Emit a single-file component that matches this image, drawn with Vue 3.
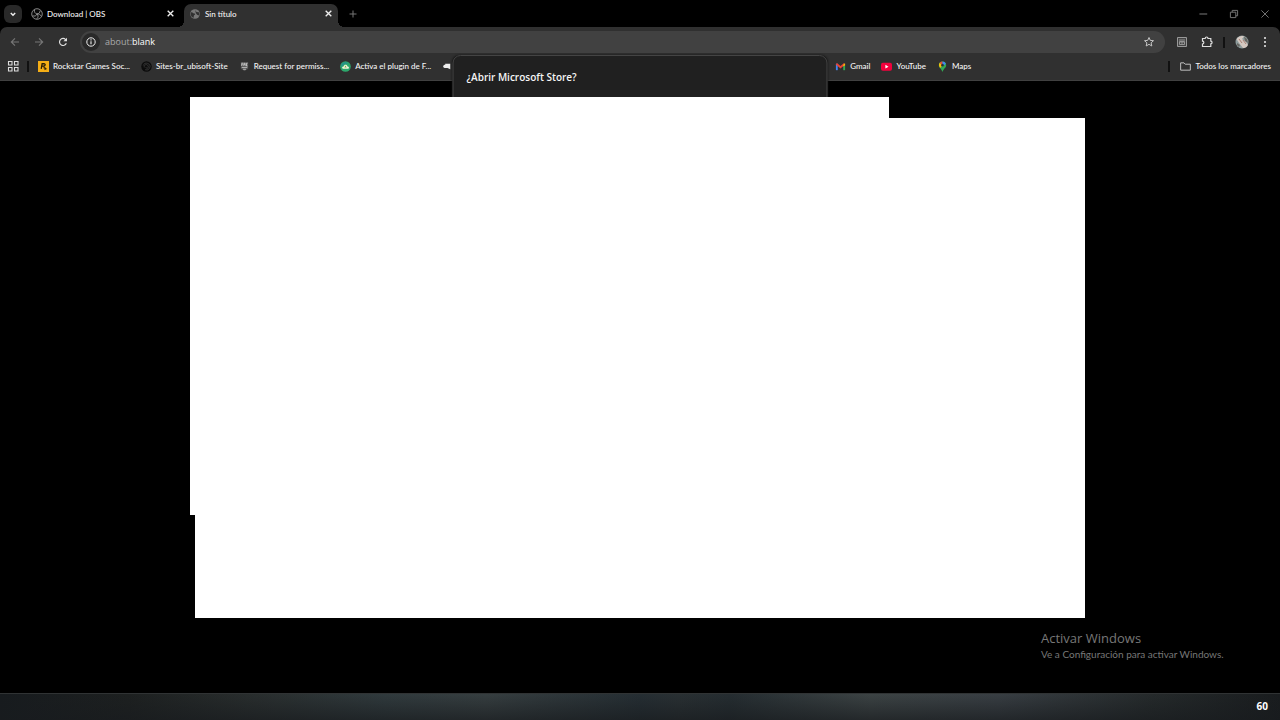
<script setup>
const bookmarks = [
  { label: 'Rockstar Games Soc...', icon: 'rockstar' },
  { label: 'Sites-br_ubisoft-Site', icon: 'ubisoft' },
  { label: 'Request for permiss...', icon: 'epic' },
  { label: 'Activa el plugin de F...', icon: 'plugin' },
]
const googleLinks = [
  { label: 'Gmail', icon: 'gmail' },
  { label: 'YouTube', icon: 'youtube' },
  { label: 'Maps', icon: 'maps' },
]
</script>

<template>
  <div class="desktop">
    <header class="browser">
      <div class="titlebar">
        <button class="tab-search" aria-label="Buscar pestañas">
          <svg viewBox="0 0 18 18"><path d="M6.8 8 9 10.2 11.2 8" fill="none" stroke="#eee" stroke-width="1.5" /></svg>
        </button>
        <div class="tab">
          <svg class="favicon" viewBox="0 0 12 12">
            <circle cx="6" cy="6" r="5.3" fill="#090909" stroke="#a5a5a5" stroke-width=".8" />
            <path d="M3.5 1.8C3 4 4.1 5.5 6 6c2-.2 3.2-1.6 3-3.3M6 6c-.8 1.9-2.4 2.6-4.4 1.8M6 6c1.5 1.4 1.4 3.3-.2 4.8M6 6c1.8-.3 3.5.6 4.3 2.2" fill="none" stroke="#999" stroke-width=".9" />
          </svg>
          <span class="tab-title">Download | OBS</span>
          <button class="close" aria-label="Cerrar Download"><svg viewBox="0 0 8 8"><path d="m1.5 1.5 5 5m0-5-5 5" stroke="#eee" stroke-width="1.2" /></svg></button>
        </div>
        <div class="tab active">
          <svg class="favicon globe" viewBox="0 0 12 12">
            <circle cx="6" cy="6" r="4.8" fill="#777" />
            <path d="M2 4.2c1.8-.3 2.2 1.3 3.8 1.4.8.5.1 1.4-.8 1.7-.2 1-.3 1.8-.6 2.6C2.5 9 1.7 7.5 1.7 6zM6.3 2l1.2 1.9 2.3.3c.6 1.2.7 2.2.3 3.2L8 6.8 6.8 5z" fill="#303030" />
          </svg>
          <span class="tab-title">Sin título</span>
          <button class="close" aria-label="Cerrar Sin título"><svg viewBox="0 0 8 8"><path d="m1.5 1.5 5 5m0-5-5 5" stroke="#eee" stroke-width="1.2" /></svg></button>
        </div>
        <button class="new-tab" aria-label="Nueva pestaña"><svg viewBox="0 0 10 10"><path d="M5 1.5v7M1.5 5h7" stroke="#777" /></svg></button>
        <div class="window-controls">
          <button aria-label="Minimizar"><svg viewBox="0 0 10 10"><path d="M2 5h6.500" stroke="#666" /></svg></button>
          <button aria-label="Restaurar"><svg viewBox="0 0 10 10"><path d="M2 3.500h4.500V8H2zM3.500 3.500V2H8v4.500H6.500" fill="none" stroke="#777" stroke-width=".8" /></svg></button>
          <button aria-label="Cerrar"><svg viewBox="0 0 10 10"><path d="m2 2 6 6m0-6L2 8" stroke="#777" stroke-width=".8" /></svg></button>
        </div>
      </div>

      <div class="chrome">
        <div class="toolbar">
          <div class="navigation">
            <button class="nav" aria-label="Atrás"><svg viewBox="0 0 12 12"><path d="M10 6H2.500M6 2.300 2.300 6 6 9.700" fill="none" stroke="#777" stroke-width="1.100" /></svg></button>
            <button class="nav" aria-label="Adelante"><svg viewBox="0 0 12 12"><path d="M2 6h7.500M6 2.300 9.700 6 6 9.700" fill="none" stroke="#777" stroke-width="1.100" /></svg></button>
            <button class="nav" aria-label="Recargar"><svg viewBox="0 0 12 12"><path d="M9.300 7.200A3.500 3.500 0 1 1 8.600 3.600L9.500 4.600" fill="none" stroke="#ddd" stroke-width="1.200" /><path d="M10 1.700v3.600H6.400z" fill="#ddd" /></svg></button>
          </div>
          <div class="omnibox">
            <button class="info" aria-label="Información del sitio"><svg viewBox="0 0 12 12"><circle cx="6" cy="6" r="4.200" fill="none" stroke="#eee" /><path d="M6 5.300v3M6 3.300v1.100" stroke="#eee" stroke-width="1.100" /></svg></button>
            <div class="address"><span>about:</span>blank</div>
            <button class="star" aria-label="Añadir a marcadores"><svg viewBox="0 0 12 12"><path d="m6 1.500 1.300 2.900 3.200.3L8.100 6.800l.7 3.200L6 8.300 3.200 10l.7-3.200-2.400-2.100 3.200-.3z" fill="none" stroke="#c4c4c4" stroke-width="1" /></svg></button>
          </div>
          <div class="actions">
            <button class="extension" aria-label="Extensión"><svg viewBox="0 0 12 12"><path d="M1.500 1.500h9v9h-9z" fill="#444" stroke="#999" /><path d="M3 4h6M3.500 5.500h5v3h-5z" fill="none" stroke="#aaa" stroke-width=".8" /><path d="M5 6v1h2V6" fill="none" stroke="#aaa" stroke-width=".7" /></svg></button>
            <button aria-label="Extensiones"><svg viewBox="0 0 12 12"><path d="M1.500 2.500h2.700c0-2 2.800-2 2.800 0h2.800v2.600c1.700.1 1.700 2.700 0 2.800v2.600H1.500V8c1.800-.2 1.800-2.600 0-2.800z" fill="none" stroke="#ddd" stroke-width="1.200" /></svg></button>
            <i class="separator"></i>
            <button class="profile" aria-label="Perfil"><svg viewBox="0 0 14 14"><circle cx="7" cy="7" r="6.500" fill="#8d9b9c" /><path d="M1.500 4C4 1 7 .5 9 1.500L7 4l4 3 2 3c-1 2-3 3.500-5 3L4 8z" fill="#d4c8c1" /><path d="m9 1.500 3 2.500 1 4-3-2zM2 8l3 2-1 2-2-2z" fill="#66645f" /><path d="m4 4 3 4M8 5l3 4" stroke="#a88075" /></svg></button>
            <button aria-label="Menú"><svg viewBox="0 0 12 12"><g fill="#eee"><circle cx="6" cy="2" r="1" /><circle cx="6" cy="6" r="1" /><circle cx="6" cy="10" r="1" /></g></svg></button>
          </div>
        </div>

        <nav class="bookmarks" aria-label="Marcadores">
          <button class="apps" aria-label="Aplicaciones"><svg viewBox="0 0 12 12"><path d="M1.500 1.500H5V5H1.500zM7.500 1.500H11V5H7.500zM1.500 7.500H5V11H1.500zM7.500 7.500H11V11H7.500z" fill="none" stroke="#ddd" stroke-width="1.100" /></svg></button>
          <i class="separator"></i>
          <div class="saved">
            <a v-for="item in bookmarks" :key="item.label" href="#">
              <svg viewBox="0 0 12 12">
                <template v-if="item.icon === 'rockstar'"><path d="M0 0h12v12H0z" fill="#f5ae16" /><path d="M3.500 8.500 4.500 3h2c2 0 1.700 2.500-.5 2.500H4.200M6 5.500c1.200.2.700 1.400.8 2.200" fill="none" stroke="#281b05" stroke-width="1.400" /><path d="m8 6.500.5 1.300H10L8.800 8.700l.4 1.300L8 9.200 6.800 10l.4-1.300L6 7.800h1.500z" fill="#281b05" /></template>
                <template v-else-if="item.icon === 'ubisoft'"><circle cx="6" cy="6" r="5.700" fill="#0c0c0c" /><path d="M2.500 5a3.700 3.700 0 1 1 2 4.500M3.500 7C3 3 8 3 8 6.500 7.500 9 5 8 5.500 6.500" fill="none" stroke="#3c3c3c" stroke-width=".9" /></template>
                <template v-else-if="item.icon === 'epic'"><path d="M2 1h8v7.500L6 11 2 8.500z" fill="#555" /><path d="M3 5.500v-3h1.300M3 4h1M5.300 5.500v-3h1v1.500h-1M7.500 2.500v3M9.300 2.500h-1v3h1M3 7h6M4.500 9h3" fill="none" stroke="#ddd" stroke-width=".8" /></template>
                <template v-else><circle cx="6" cy="6" r="5.800" fill="#2da66b" /><path d="M2 6a4 4 0 0 1 6-3.400" fill="none" stroke="#248d92" stroke-width="1.500" /><path d="M3.400 8.500C1.500 8 2.200 5.800 4 6c.4-2.500 3.700-2.500 4.200 0 2 0 2.200 2.500.4 2.500z" fill="#f4f5dc" /><path d="m6 5 1.300 2H4.700z" fill="#74b344" /></template>
              </svg>
              <span>{{ item.label }}</span>
            </a>
            <a class="cloud" href="#" aria-label="Marcador"><svg viewBox="0 0 12 12"><path d="M3.500 3H9v6L6 7.500H3C.5 7 .8 4 3.500 4z" fill="#eee" /></svg></a>
          </div>
          <div class="google">
            <a v-for="item in googleLinks" :key="item.label" href="#">
              <svg viewBox="0 0 12 12">
                <template v-if="item.icon === 'gmail'"><path d="M2 10V3" stroke="#4285f4" stroke-width="2" /><path d="M10 10V3" stroke="#34a853" stroke-width="2" /><path d="M1.500 3 6 6.800 10.500 3" fill="none" stroke="#ea4335" stroke-width="2" /><path d="M9 4.200 11 2.500v2L9 6z" fill="#fbbc04" /></template>
                <template v-else-if="item.icon === 'youtube'"><rect y="2" width="12" height="8.500" rx="2" fill="#f2003c" /><path d="m4.800 4.200 3.400 2-3.400 2z" fill="#fff" /></template>
                <template v-else><path d="M2 4.500a4 4 0 0 1 8 0C10 7.500 7 8 6 12 5 8 2 7.500 2 4.500" fill="#34a853" /><path d="M2.300 5.500A4 4 0 0 1 3 2l3 2.500-2.500 3z" fill="#fbbc04" /><path d="M3 2a4 4 0 0 1 3-1.500L6 4.500z" fill="#ea4335" /><path d="M6 .500A4 4 0 0 1 9.600 3L6 6z" fill="#4285f4" /><circle cx="6" cy="4.500" r="1.400" fill="#303030" /></template>
              </svg>
              <span>{{ item.label }}</span>
            </a>
          </div>
          <div class="all">
            <i class="separator"></i>
            <a href="#"><svg viewBox="0 0 12 12"><path d="M.7 2h3.600l1.400 1.500h5.600V10H.7z" fill="none" stroke="#ccc" /></svg><span>Todos los marcadores</span></a>
          </div>
        </nav>
      </div>
    </header>

    <main class="page">
      <section class="dialog" role="dialog" aria-labelledby="dialog-title"><h1 id="dialog-title">¿Abrir Microsoft Store?</h1></section>
      <div class="pane back"></div>
      <div class="pane front"></div>
      <aside class="activation"><h2>Activar Windows</h2><p>Ve a Configuración para activar Windows.</p></aside>
    </main>
    <footer class="taskbar"><span>60</span></footer>
  </div>
</template>

<style>
html, body { margin: 0; background: #000; }
</style>

<style scoped>
* { box-sizing: border-box; }
.desktop { min-height: 100vh; display: flex; flex-direction: column; background: #000; color: #f5f5f5; font: 500 8px/12px Lato, "Open Sans", sans-serif; overflow: hidden; }
button { border: 0; padding: 0; background: none; color: inherit; display: flex; align-items: center; justify-content: center; flex: none; }
svg { display: block; width: 12px; height: 12px; flex: none; }
a { color: inherit; text-decoration: none; white-space: nowrap; }
.titlebar { height: 27px; display: flex; align-items: center; padding-left: 4px; }
.tab-search { width: 18px; height: 18px; border-radius: 6px; background: #292929; }
.tab-search svg { width: 18px; height: 18px; }
.tab { display: flex; align-items: center; width: 154px; height: 23px; margin-left: 4px; padding: 0 5px; gap: 4px; }
.tab.active { position: relative; align-self: flex-end; padding-bottom: 4px; background: #303030; border-radius: 7px 7px 0 0; }
.tab.active::before, .tab.active::after { content: ""; position: absolute; bottom: 0; width: 6px; height: 6px; }
.tab.active::before { right: 100%; background: radial-gradient(circle at 0 0, #000 6px, #303030 6px); }
.tab.active::after { left: 100%; background: radial-gradient(circle at 100% 0, #000 6px, #303030 6px); }
.tab-title { flex: 1; }
.close, .close svg { width: 9px; height: 9px; }
.new-tab { margin-left: 10px; }
.new-tab svg { width: 10px; height: 10px; }
.window-controls { display: flex; gap: 19px; margin-left: auto; padding-right: 9px; }
.chrome { height: 54px; background: #303030; border-radius: 7px 7px 0 0; border-bottom: 1px solid #404040; }
.toolbar { display: flex; align-items: center; padding: 4px 9px 0; }
.navigation { display: flex; gap: 12px; margin-right: 11px; }
.nav { width: 12px; height: 22px; }
.omnibox { flex: 1; display: flex; align-items: center; height: 22px; border-radius: 11px; background: #414141; padding: 0 10px 0 2px; }
.info { width: 18px; height: 18px; border-radius: 50%; background: #292929; }
.address { flex: 1; margin-left: 5px; font: 9px/12px "Open Sans", sans-serif; color: #fff; }
.address span { color: #aaa; }
.actions { display: flex; align-items: center; gap: 10px; margin-left: 11px; }
.extension { margin-right: 3px; }
.separator { width: 2px; height: 11px; background: #111; flex: none; }
.profile svg { width: 14px; height: 14px; }
.bookmarks { display: flex; align-items: center; height: 26px; padding: 0 9px 0 7px; }
.bookmarks > .separator { margin: 0 9px 0 8px; }
.bookmarks a { display: flex; align-items: center; gap: 4px; }
.bookmarks a svg { width: 11px; height: 11px; }
.saved { display: flex; gap: 11px; }
.google { display: flex; gap: 11px; margin-left: 382px; }
.all { display: flex; align-items: center; gap: 10px; margin-left: auto; }
.page { flex: 1; position: relative; min-height: 612px; }
.dialog { position: absolute; top: -26px; left: 50%; width: 375px; height: 140px; transform: translateX(-50%); border: 1px solid #444; border-radius: 8px; background: #202020; padding: 13px; box-shadow: 0 0 2px #111; }
h1, h2, p { margin: 0; font-family: "Open Sans", sans-serif; font-weight: 400; }
h1 { font-size: 10px; line-height: 16px; font-weight: 600; }
.pane { position: absolute; background: #fff; }
.back { left: 190px; right: 391px; top: 16px; bottom: 178px; }
.front { left: 195px; right: 195px; top: 37px; bottom: 75px; }
.activation { position: absolute; right: 55px; bottom: 32px; width: 184px; color: #777; white-space: nowrap; }
h2 { font-size: 13px; line-height: 17px; }
p { font-family: Lato, sans-serif; font-size: 10px; line-height: 14px; }
.taskbar { height: 27px; display: flex; align-items: center; justify-content: flex-end; padding: 0 12px 2px; border-top: 1px solid #303334; background: linear-gradient(to bottom, transparent, #181b1eaa), linear-gradient(to right, #171b1e, #1d2020 10%, #292e2e 20%, #303a3d 30%, #363e40 38%, #252e33 50%, #293033 53%, #252d31 57%, #3c4344 68%, #383e43 78%, #252a2b 90%, #191c1e); }
.taskbar span { font: 700 10px/12px "Open Sans", sans-serif; color: #fff; }
</style>
